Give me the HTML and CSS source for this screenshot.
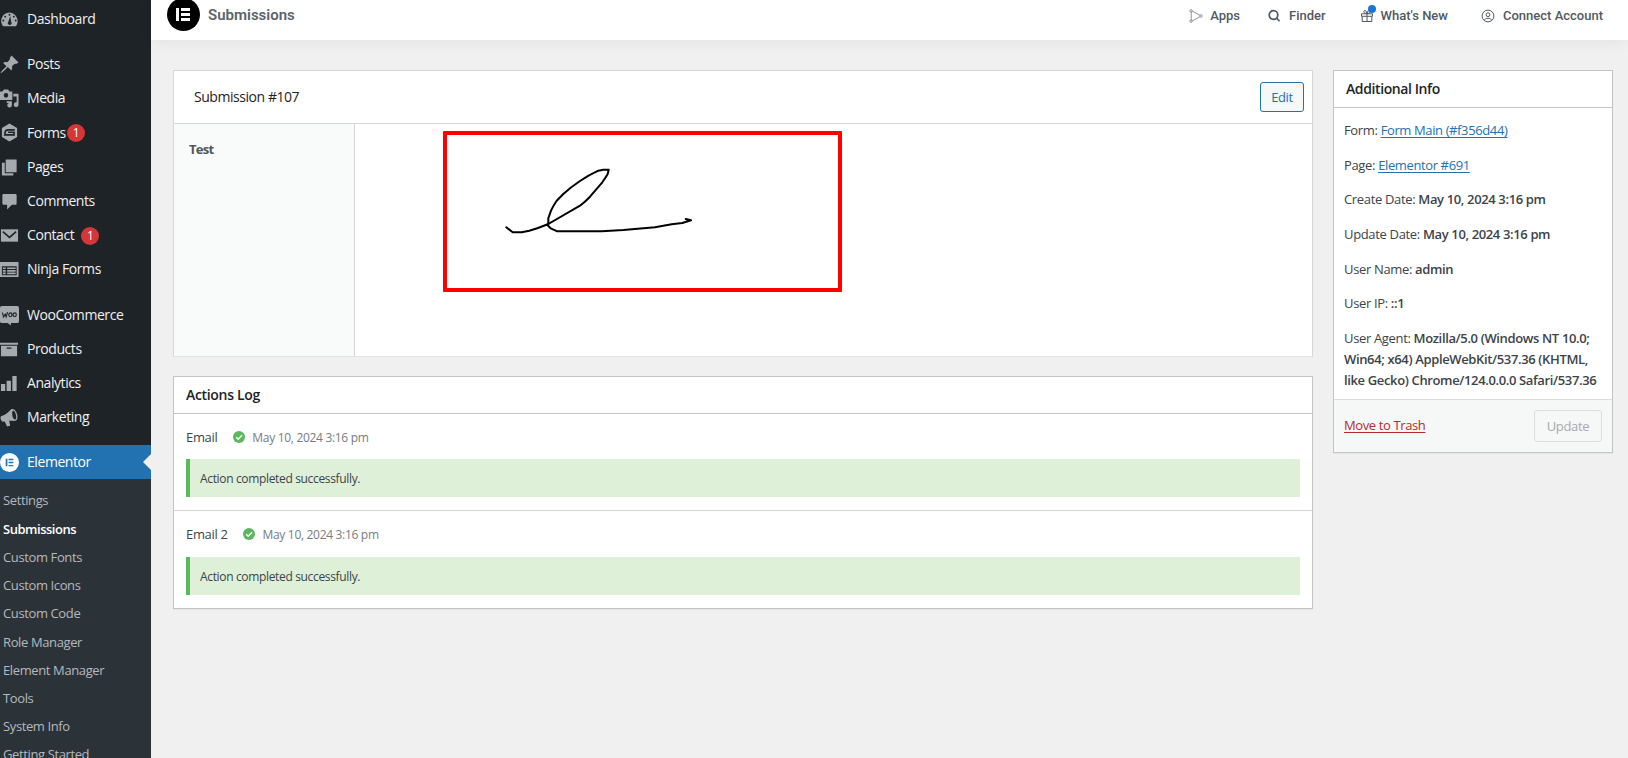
FILE: index.html
```html
<!DOCTYPE html>
<html lang="en">
<head>
<meta charset="utf-8">
<title>Submissions</title>
<link rel="stylesheet" href="styles.css">
</head>
<body>
<div class="app">
  <nav class="sidebar">
    <ul class="menu">
      <li><svg viewBox="0 0 20 20"><path fill-rule="evenodd" d="M3.200 17h13.600A9.200 9.200 0 0 0 10 2.500A9 9 0 0 0 3.200 17zM10 4a1 1 0 1 1 0 2 1 1 0 0 1 0-2zM5.500 6a1 1 0 1 1 0 2 1 1 0 0 1 0-2zM14.500 6a1 1 0 1 1 0 2 1 1 0 0 1 0-2zM3.500 10a1 1 0 1 1 0 2 1 1 0 0 1 0-2zM16.500 10a1 1 0 1 1 0 2 1 1 0 0 1 0-2zM10.800 6.500l1 6a2 2 0 1 1-3-.2z"/></svg><span>Dashboard</span></li>
      <li class="gap"><svg viewBox="0 0 20 20"><path d="M10.400 3l1.800-2.500 7.300 7.300-2 1.500c-1-.3-1.800-.2-2.600.4l-2.200 2c.4 1.600 0 3.300-.8 4.600l-3.700-3.700C5.500 15.500 3 18 .3 19.500 1.500 16.800 4.400 14.200 6.800 11.900L3.200 8.300c1.200-1 2.800-1.200 4.400-.8l2.200-2c.7-.8.900-1.600.6-2.500z"/></svg><span>Posts</span></li>
      <li><svg viewBox="0 0 20 20"><path fill-rule="evenodd" d="M0 2.500h2.500L4 .5h4.500l1.500 2h3v9H0zM6.300 4.300a2.400 2.400 0 1 0 0 4.800 2.400 2.400 0 0 0 0-4.800z"/><path d="M14 5h5.500v11.500a2.500 2.500 0 1 1-2-2.500V8H14zM7 13h5.500v4a2.400 2.400 0 1 1-2-2.300H7z"/></svg><span>Media</span></li>
      <li class="tall"><svg viewBox="0 0 20 20"><path d="M10 .5l8 4.700v9.600l-8 4.700-8-4.700V5.200z"/><path class="cut" d="M15.500 7.200H8.500Q6 7.200 5.500 9.500L5 12.500h9.800V9.800H8.500"/></svg><span>Forms</span><b class="badge near">1</b></li>
      <li><svg viewBox="0 0 20 20"><path d="M6 1.500h11.500v13.500H6zM2 5h3v11h9v2.500H2z"/></svg><span>Pages</span></li>
      <li><svg viewBox="0 0 20 20"><path d="M4 2h12.500a1.500 1.500 0 0 1 1 1.500V12a1.500 1.500 0 0 1-1 1.500h-4l-5 5v-5H4a2 2 0 0 1-1.500-1.500V3.500A1.500 1.500 0 0 1 4 2z"/></svg><span>Comments</span></li>
      <li><svg viewBox="0 0 20 20"><path d="M1 3.500h18v13H1z"/><path class="cut" d="M3 6l7 6 7-6"/></svg><span>Contact</span><b class="badge">1</b></li>
      <li><svg viewBox="0 0 20 20"><path fill-rule="evenodd" d="M0 2h19.500v16H0zM2 6.500v9.500h15.500V6.500z"/><path d="M3 7.800h3v1.800H3zM3 10.500h3v1.800H3zM3 13.200h3v1.800H3zM7.500 7.800h9v1.800h-9zM7.500 10.500h9v1.800h-9zM7.500 13.200h9v1.800h-9z"/></svg><span>Ninja Forms</span></li>
      <li class="gap more"><svg viewBox="0 0 20 20"><path d="M2 0h16q2 0 2 2v14q0 2-2 2h-6.500v2.500L8 18H2q-2 0-2-2V2q0-2 2-2z"/><path class="cut thin" d="M2.500 7l1.300 4.500L5.500 8.500l1 3L8 6.500M11 7.300c-2.500 0-2.200 4 0 4s2.200-4 0-4zM15.500 7.300c-2.500 0-2.200 4 0 4s2.200-4 0-4z"/></svg><span>WooCommerce</span></li>
      <li><svg viewBox="0 0 20 20"><path fill-rule="evenodd" d="M0 3h19v2H0zM1 6h17v11H1zM7 8v1.300h5V8z"/></svg><span>Products</span></li>
      <li><svg viewBox="0 0 20 20"><path d="M1 10.500h4.500V18H1zM7 7h4.500v11H7zM13 2h4.500v16H13z"/></svg><span>Analytics</span></li>
      <li><svg viewBox="0 0 20 20"><path fill-rule="evenodd" d="M18.200 7.500c.6 3-.2 5.500-2 6-2 .3-4.200-.2-6.500 0l1 5.300-3.300.7L5 14.300l-2.500.2C.5 12.500 0 10.500 1 8.800 5 7.200 8.500 5 11.500 1.500c3-1.800 6 2 6.700 6zM14 3c-1.300.3-1.500 2.800-.9 5.300.6 2.400 1.900 4.100 3 3.800s1.200-2.600.6-5S15.200 2.700 14 3z"/></svg><span>Marketing</span></li>
      <li class="gap current"><svg viewBox="0 0 20 20"><circle cx="10" cy="10" r="10"/><path class="blue" d="M6 6h1.800v8H6zM9 6h5v1.500H9zM9 9.200h5v1.500H9zM9 12.500h5V14H9z"/></svg><span>Elementor</span></li>
    </ul>
    <ul class="submenu">
      <li>Settings</li><li class="active">Submissions</li><li>Custom Fonts</li><li>Custom Icons</li><li>Custom Code</li><li>Role Manager</li><li>Element Manager</li><li>Tools</li><li>System Info</li><li>Getting Started</li>
    </ul>
  </nav>
  <div class="content">
    <header class="topbar">
      <svg class="logo" viewBox="0 0 33 33"><circle cx="16.500" cy="16.500" r="16.500"/><path fill="#fff" d="M9 10h3v13H9zM14 10h9v3h-9zM14 15h9v3h-9zM14 20h9v3h-9z"/></svg>
      <h1>Submissions</h1>
      <div class="links">
        <a class="apps"><svg viewBox="0 0 14 14"><g fill="none" stroke="#858b92" stroke-width=".9"><path d="M2.200 2.500v9M3 2l8 4.300M3 12l8-4.300"/><circle cx="2" cy="1.800" r="1.200"/><circle cx="2" cy="12.200" r="1.200"/><circle cx="12" cy="7" r="1.200"/></g></svg>Apps</a>
        <a class="finder"><svg viewBox="0 0 14 14"><g fill="none" stroke="#515962" stroke-width="1.700"><circle cx="6.500" cy="6" r="4.300"/><path d="M9.500 9l3 3.300"/></g></svg>Finder</a>
        <a class="news"><svg viewBox="0 0 14 14"><g fill="none" stroke="#515962"><path d="M2.200 7.500v5h9.600v-5M1.500 4.800h11v2.500h-11zM7 5v7.500M7 4.500C4 4.500 3 2.500 4.200 1.700S6.500 2 7 4.500c.5-2.500 1.600-3.600 2.800-2.800S10 4.500 7 4.500"/></g></svg><i class="dot"></i>What's New</a>
        <a class="account"><svg viewBox="0 0 14 14"><g fill="none" stroke="#515962"><circle cx="7" cy="7" r="5.900"/><circle cx="7" cy="5.700" r="1.900"/><path d="M3.700 11.500C4 9.500 5 9.300 7 9.300s3 .2 3.300 2.200"/></g></svg>Connect Account</a>
      </div>
    </header>
    <main class="main">
      <div class="primary">
        <section class="submission">
          <div class="submission-head"><h2>Submission #107</h2><button class="edit">Edit</button></div>
          <div class="submission-body">
            <div class="field-name">Test</div>
            <div class="field-value">
              <svg class="signature" viewBox="4 4 391 153"><path d="M63.300 96.300L69.700 101.300H78.700L86.300 99.700Q96 97 105.300 93L137 74.700Q142 71 147 65.700L159.300 51.300Q163 46 164.700 43L165.700 38.700H160.300L155.300 39.700Q146 44 137 50T120.300 63L113.700 69.700Q110 75 108 79.700L105.300 87.300V95L107.700 97.300L114.300 100.300H158.700L180.300 99L212 96.300L228.700 93.300L239.300 92L248 89.300L242.700 88"/></svg>
            </div>
          </div>
        </section>
        <section class="box log">
          <h2>Actions Log</h2>
          <div class="entry">
            <div class="entry-head">Email<svg viewBox="0 0 12 12"><circle cx="6" cy="6" r="6"/><path d="M3.200 6.200l2 2 3.800-4"/></svg><time>May 10, 2024 3:16 pm</time></div>
            <p class="notice">Action completed successfully.</p>
          </div>
          <div class="entry second">
            <div class="entry-head">Email 2<svg viewBox="0 0 12 12"><circle cx="6" cy="6" r="6"/><path d="M3.200 6.200l2 2 3.800-4"/></svg><time>May 10, 2024 3:16 pm</time></div>
            <p class="notice">Action completed successfully.</p>
          </div>
        </section>
      </div>
      <aside class="box info">
        <h2>Additional Info</h2>
        <div class="details">
          <p>Form: <a>Form Main (#f356d44)</a></p>
          <p>Page: <a>Elementor #691</a></p>
          <p>Create Date: <b>May 10, 2024 3:16 pm</b></p>
          <p>Update Date: <b>May 10, 2024 3:16 pm</b></p>
          <p>User Name: <b>admin</b></p>
          <p>User IP: <b>::1</b></p>
          <p class="agent">User Agent: <b>Mozilla/5.0 (Windows NT 10.0;<br>Win64; x64) AppleWebKit/537.36 (KHTML,<br>like Gecko) Chrome/124.0.0.0 Safari/537.36</b></p>
        </div>
        <div class="info-foot"><a class="trash">Move to Trash</a><button class="update">Update</button></div>
      </aside>
    </main>
  </div>
</div>
</body>
</html>
```
FILE: styles.css
```css
* { box-sizing: border-box; }
body { margin: 0; background: #f0f0f0; color: #3c434a; font: 13px/20px "Open Sans", "Noto Sans", sans-serif; letter-spacing: -.34px; overflow: hidden; }
h1, h2, p, ul { margin: 0; padding: 0; list-style: none; }
button { font: inherit; letter-spacing: inherit; padding: 0; }
.app { display: flex; height: 758px; }
.sidebar { width: 151px; flex: none; background: #1d2327; overflow: hidden; display: flex; flex-direction: column; }
.menu { padding-top: 2px; flex: none; }
.menu li { display: flex; align-items: center; height: 34px; color: #f0f0f1; font-size: 14px; letter-spacing: -.43px; }
.menu li.tall { height: 35px; }
.menu li.gap { margin-top: 11px; }
.menu li.more { margin-top: 12px; }
.menu svg { width: 19px; height: 19px; margin-right: 8px; fill: #a7aaad; flex: none; overflow: visible; }
.menu .cut { fill: none; stroke: #1d2327; stroke-width: 1.7; }
.menu .thin { stroke-width: 1.2; }
.badge { width: 18px; height: 18px; margin: 1px 0 0 7px; border-radius: 9px; background: #d63638; color: #fff; font-size: 12px; font-weight: 400; line-height: 18px; text-align: center; }
.badge.near { margin-left: 1px; }
.menu .current { background: #2271b1; color: #fff; }
.current svg { fill: #fff; }
.current .blue { fill: #2271b1; }
.current::after { content: ""; margin-left: auto; border: 8px solid transparent; border-left: 0; border-right-color: #f0f0f0; }
.submenu { flex: 1; padding: 7px 0 0 3px; background: #2c3338; }
.submenu li { height: 28.15px; line-height: 28px; color: #b4b9be; font-size: 13px; letter-spacing: -.38px; }
.submenu li:first-child { height: 29px; }
.submenu .active { color: #fff; font-weight: 600; letter-spacing: -.48px; }
.content { flex: 1; min-width: 0; }
.topbar { height: 40px; display: flex; align-items: flex-start; padding: 0 25px 0 16px; background: #fff; box-shadow: 0 3px 14px rgba(0,0,0,.05); font-family: Roboto, sans-serif; letter-spacing: 0; color: #515962; }
.logo { width: 33px; height: 33px; margin-top: -2px; }
.topbar h1 { margin: 5px 0 0 8px; font-size: 15px; line-height: 20px; font-weight: 600; color: #5b636c; }
.links { display: flex; margin: 5px 0 0 auto; font-size: 13px; font-weight: 500; line-height: 21px; }
.links a { display: flex; align-items: center; position: relative; }
.links svg { width: 14px; height: 14px; margin-right: 7px; }
.links .finder svg { margin-right: 8px; }
.links .account svg { margin-right: 8px; }
.finder { margin-left: 27px; }
.news { margin-left: 34px; }
.account { margin-left: 33px; }
.dot { position: absolute; left: 8px; top: 0; width: 8px; height: 8px; border-radius: 50%; background: #1976d8; }
.main { display: flex; gap: 20px; align-items: flex-start; padding: 30px 15px 0 22px; }
.primary { flex: 1; }
h2 { font-size: 14px; font-weight: 600; color: #1d2327; letter-spacing: -.4px; }
.submission { height: 287px; border: 1px solid #d5d6d9; border-bottom-color: #e4e4e6; background: #fff; display: flex; flex-direction: column; }
.submission-head { display: flex; align-items: center; justify-content: space-between; height: 53px; padding: 0 8px 0 20px; border-bottom: 1px solid #d5d6d9; }
.submission-head h2 { font-weight: 500; letter-spacing: -.45px; }
.edit { width: 44px; height: 30px; border: 1px solid #2271b1; border-radius: 3px; background: #f6f7f7; color: #2271b1; }
.submission-body { flex: 1; display: flex; }
.field-name { width: 181px; padding: 15px; border-right: 1px solid #d5d6d9; background: #f9fafa; font-weight: 700; letter-spacing: -.7px; color: #50575e; }
.field-value { padding: 7px 0 0 88px; }
.signature { display: block; width: 399px; height: 161px; border: 4px solid #f00; border-radius: 1px; }
.signature path { fill: none; stroke: #000; stroke-width: 2; stroke-linejoin: round; stroke-linecap: round; }
.box { border: 1px solid #c3c4c7; background: #fff; box-shadow: 0 1px 1px rgba(0,0,0,.04); }
.box h2 { height: 37px; padding: 0 12px; border-bottom: 1px solid #c3c4c7; line-height: 36px; }
.log { margin-top: 19px; }
.log h2 { letter-spacing: -.32px; }
.entry { height: 96px; padding: 12px 12px 0; }
.entry.second { height: 98px; border-top: 1px solid #d5d6d9; }
.entry-head { display: flex; align-items: center; height: 22px; }
.entry-head svg { width: 12px; height: 12px; margin: 0 7px 0 16px; fill: #5cb85c; }
.entry-head path { fill: none; stroke: #fff; stroke-width: 1.4; }
.entry-head time { color: #787c82; font-size: 12px; padding-top: 1px; letter-spacing: -.31px; }
.notice { height: 38px; margin-top: 11px; padding-left: 10px; border-left: 4px solid #5cb85c; background: #dff0d8; font-size: 12px; line-height: 40px; }
.second .notice { margin-top: 12px; }
.info { width: 280px; height: 383px; }
.details { height: 291px; padding: 12px 10px 0; }
.details p { height: 34.7px; line-height: 21px; white-space: nowrap; }
.details b { font-weight: 600; letter-spacing: -.36px; }
.info a { color: #2271b1; text-decoration: underline; text-underline-offset: 2px; letter-spacing: -.38px; }
.info-foot { display: flex; align-items: center; justify-content: space-between; height: 53px; padding: 0 10px; border-top: 1px solid #dcdcde; background: #f6f7f7; }
.info .trash { color: #b32d2e; margin-top: -2px; }
.update { width: 68px; height: 32px; border: 1px solid #dcdcde; border-radius: 3px; background: #f6f7f7; color: #a7aaad; }
```
